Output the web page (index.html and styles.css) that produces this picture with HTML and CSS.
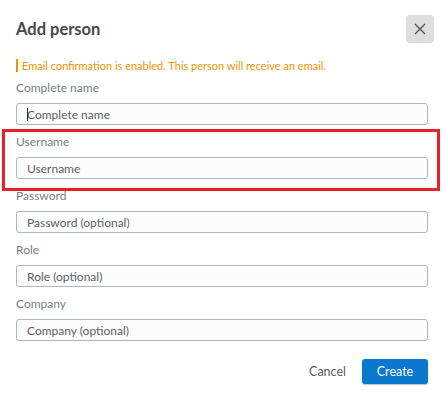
FILE: index.html
```html
<!DOCTYPE html>
<html>
<head>
<meta charset="utf-8">
<link rel="stylesheet" href="styles.css">
</head>
<body>
<div class="dialog">
  <div class="header">
    <h1 class="title">Add person</h1>
    <button class="close" aria-label="Close">
      <svg width="12" height="12" viewBox="0 0 12 12"><path d="M1 1L11 11M11 1L1 11" stroke="#555" stroke-width="1.4" fill="none"/></svg>
    </button>
  </div>
  <div class="notice">Email confirmation is enabled. This person will receive an email.</div>
  <div class="fields">
    <div class="field">
      <label class="label">Complete name</label>
      <div class="input focused"><span class="caret"></span><span class="ph">Complete name</span></div>
    </div>
    <div class="field highlighted">
      <label class="label">Username</label>
      <div class="input"><span class="ph">Username</span></div>
    </div>
    <div class="field">
      <label class="label">Password</label>
      <div class="input"><span class="ph">Password (optional)</span></div>
    </div>
    <div class="field">
      <label class="label">Role</label>
      <div class="input"><span class="ph">Role (optional)</span></div>
    </div>
    <div class="field">
      <label class="label">Company</label>
      <div class="input"><span class="ph">Company (optional)</span></div>
    </div>
  </div>
  <div class="actions">
    <button class="btn-cancel">Cancel</button>
    <button class="btn-create">Create</button>
  </div>
</div>
</body>
</html>
```
FILE: styles.css
```css
* { box-sizing: border-box; }
html, body { margin: 0; padding: 0; background: #fff; }
body {
  font-family: Lato, "Liberation Sans", sans-serif;
  width: 446px;
  height: 401px;
  overflow: hidden;
}
.dialog {
  padding: 15px 12px 0 16px;
}
.header {
  display: flex;
  align-items: center;
  justify-content: space-between;
  height: 28px;
}
.title {
  margin: 0;
  font-size: 16.5px;
  font-weight: 700;
  color: #484848;
}
.close {
  width: 28px;
  height: 28px;
  border: none;
  border-radius: 4px;
  background: #dedede;
  display: flex;
  align-items: center;
  justify-content: center;
  padding: 0;
}
.notice {
  margin-top: 16px;
  border-left: 2px solid #f39200;
  padding-left: 4px;
  font-size: 11px;
  line-height: 13px;
  color: #f39200;
}
.fields {
  margin-top: 8px;
  display: flex;
  flex-direction: column;
  width: 412px;
}
.field {
  display: flex;
  flex-direction: column;
  padding-bottom: 9px;
  position: relative;
}
.label {
  font-size: 12px;
  line-height: 16px;
  color: #76817f;
  margin-bottom: 7px;
}
.input {
  height: 22px;
  border: 1px solid #aab8bd;
  border-radius: 3px;
  background: #fcfcfc;
  padding: 0 10px;
  display: flex;
  align-items: center;
  position: relative;
}
.ph {
  font-size: 12px;
  color: #5c6163;
}
.caret {
  position: absolute;
  left: 10px;
  top: 4px;
  width: 1px;
  height: 13px;
  background: #222;
}
.highlighted::after {
  content: "";
  position: absolute;
  top: -5px;
  left: -14px;
  right: -12px;
  bottom: -3px;
  border: 3px solid #e8202a;
}
.actions {
  margin-top: 9px;
  display: flex;
  justify-content: flex-end;
  align-items: center;
  width: 412px;
  gap: 16px;
}
.btn-cancel {
  border: none;
  background: none;
  font-family: inherit;
  font-size: 12.5px;
  color: #5a5a5a;
  padding: 0;
}
.btn-create {
  width: 66px;
  height: 25px;
  border: none;
  border-radius: 3px;
  background: #0a78cc;
  box-shadow: 0 1px 1px rgba(0,0,0,0.25);
  color: #fff;
  font-family: inherit;
  font-size: 12.5px;
  padding: 0;
}
```
